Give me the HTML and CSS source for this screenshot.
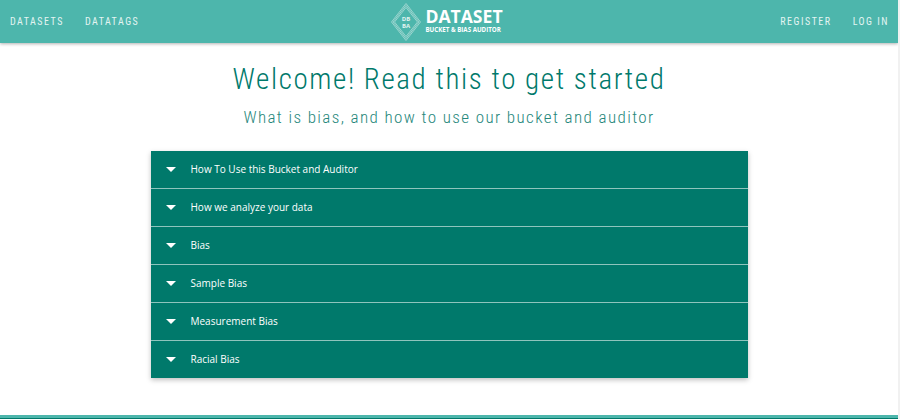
FILE: index.html
```html
<!DOCTYPE html>
<html lang="en">
<head>
    <meta charset="UTF-8">
    <title>Dataset Bucket and Bias Auditor</title>
    <link rel="stylesheet" href="styles.css">
</head>
<body>
    <!-- Top bar -->
    <nav class="navbar">
        <div class="nav-links">
            <a class="nav-link">DATASETS</a>
            <a class="nav-link">DATATAGS</a>
        </div>
        <div class="logo">
            <svg class="logo-mark" width="30" height="38" viewBox="0 0 30 38">
                <g fill="none" stroke="#cfeae6" stroke-width="0.6">
                    <path d="M15 0.5 L29.5 19 L15 37.5 L0.5 19 Z"/>
                    <path d="M15 2.5 L28 19 L15 35.5 L2 19 Z"/>
                    <path d="M15 4.5 L26.5 19 L15 33.5 L3.5 19 Z"/>
                </g>
                <text class="logo-mark-text" x="15" y="17.5" text-anchor="middle">DB</text>
                <text class="logo-mark-text" x="15" y="24.5" text-anchor="middle">BA</text>
            </svg>
            <div class="logo-text">
                <span class="logo-title">DATASET</span>
                <span class="logo-sub">BUCKET &amp; BIAS AUDITOR</span>
            </div>
        </div>
        <div class="nav-links nav-links-right">
            <a class="nav-link">REGISTER</a>
            <a class="nav-link">LOG IN</a>
        </div>
    </nav>

    <main class="content">
        <h1 class="title">Welcome! Read this to get started</h1>
        <h2 class="subtitle">What is bias, and how to use our bucket and auditor</h2>

        <ul class="accordion">
            <li class="accordion-row"><span class="caret"></span><span>How To Use this Bucket and Auditor</span></li>
            <li class="accordion-row"><span class="caret"></span><span>How we analyze your data</span></li>
            <li class="accordion-row"><span class="caret"></span><span>Bias</span></li>
            <li class="accordion-row"><span class="caret"></span><span>Sample Bias</span></li>
            <li class="accordion-row"><span class="caret"></span><span>Measurement Bias</span></li>
            <li class="accordion-row"><span class="caret"></span><span>Racial Bias</span></li>
        </ul>
    </main>

    <footer class="footer"></footer>
</body>
</html>
```

FILE: styles.css
```css
/* General */
html, body {
    margin: 0;
    padding: 0;
    height: 419px;
    overflow: hidden;
}

body {
    display: flex;
    flex-direction: column;
    background-color: #fff;
    font-family: "Open Sans", sans-serif;
    border-right: 2px solid #f1f1f1;
    box-sizing: border-box;
}

/* Top bar */
.navbar {
    display: flex;
    align-items: center;
    justify-content: space-between;
    height: 43px;
    flex-shrink: 0;
    padding: 0 9px 0 10px;
    background-color: #4db6ac;
    box-shadow: 0 1px 3px rgba(0, 0, 0, 0.3);
}

.nav-links {
    display: flex;
    gap: 21px;
    width: 200px;
}

.nav-links-right {
    justify-content: flex-end;
}

.nav-link {
    font-family: "Roboto", sans-serif;
    font-stretch: 75%;
    font-size: 10px;
    letter-spacing: 1.5px;
    color: #e3f4f2;
}

.logo {
    display: flex;
    align-items: center;
    gap: 4px;
    height: 43px;
    margin-right: 5px;
}

.logo-mark-text {
    font-family: "Open Sans", sans-serif;
    font-size: 6px;
    font-weight: 700;
    fill: #e3f4f2;
}

.logo-text {
    display: flex;
    flex-direction: column;
    color: #fff;
    font-family: "Open Sans", sans-serif;
    font-weight: 700;
}

.logo-title {
    font-size: 17.6px;
    line-height: 19px;
    margin-top: -3px;
}

.logo-sub {
    font-size: 6.2px;
    line-height: 8px;
}

/* Page content */
.content {
    flex: 1;
    display: flex;
    flex-direction: column;
    align-items: center;
}

.title {
    margin: 19px 0 0;
    font-family: "Roboto", sans-serif;
    font-stretch: 75%;
    font-size: 29px;
    font-weight: 300;
    line-height: 34px;
    letter-spacing: 1.6px;
    color: #00796b;
}

.subtitle {
    margin: 10px 0 0;
    font-family: "Roboto", sans-serif;
    font-stretch: 75%;
    font-size: 17px;
    font-weight: 300;
    line-height: 22px;
    letter-spacing: 1.4px;
    color: #26877b;
}

/* Accordion */
.accordion {
    width: 597px;
    margin: 23px 0 0;
    padding: 0;
    list-style: none;
    background-color: #00796b;
    box-shadow: 0 2px 5px rgba(0, 0, 0, 0.25);
}

.accordion-row {
    display: flex;
    align-items: center;
    height: 35px;
    padding: 0 0 2px 15px;
    font-size: 10px;
    color: #fff;
    border-bottom: 1px solid #8fc4bd;
}

.accordion-row:last-child {
    border-bottom: none;
}

.caret {
    width: 0;
    height: 0;
    margin: 2px 15px 0 0;
    border-left: 5.5px solid transparent;
    border-right: 5.5px solid transparent;
    border-top: 5px solid #fff;
}

/* Bottom line */
.footer {
    height: 3px;
    flex-shrink: 0;
    background-color: #4db6ac;
    border-bottom: 1px solid #00796b;
}
```
